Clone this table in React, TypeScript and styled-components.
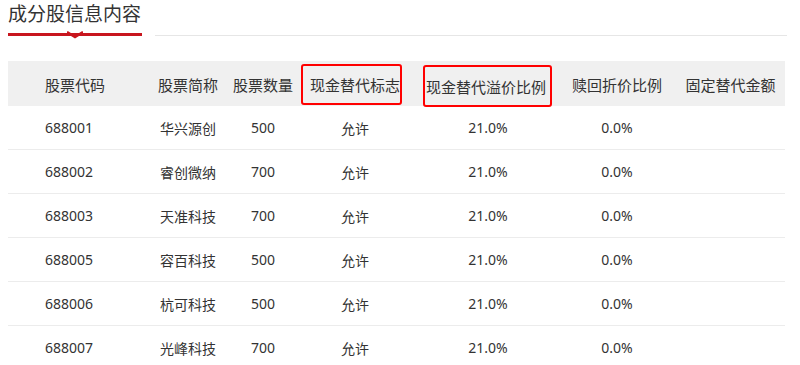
import React from 'react';
import styled, { createGlobalStyle } from 'styled-components';

const GlobalStyle = createGlobalStyle`
  body {
    margin: 0;
    background: #fff;
    font-family: "Noto Sans", "Noto Sans CJK SC", sans-serif;
    color: #333;
  }
`;

const COLS = '134px 92px 58px 126px 140px 118px 109px';

const Page = styled.div`
  padding-left: 8px;
  width: 779px;
`;

const TitleBar = styled.div`
  display: flex;
  align-items: flex-end;
  gap: 13px;
  height: 36px;
`;

const TitleTab = styled.div`
  position: relative;
  box-sizing: border-box;
  width: 134px;
  height: 100%;
  padding-top: 1px;
  border-bottom: 3px solid #c8161e;
  font-size: 19px;
  line-height: 26px;
  white-space: nowrap;
  color: #333;
`;

const Notch = styled.svg`
  position: absolute;
  left: 59px;
  top: 100%;
  margin-top: -2px;
`;

const TitleRule = styled.div`
  flex: 1;
  border-bottom: 1px solid #e6e6e6;
`;

const Table = styled.div`
  margin-top: 25px;
  width: 777px;
`;

const HeadRow = styled.div`
  display: grid;
  grid-template-columns: ${COLS};
  height: 45px;
  background: #f0f0f0;
  font-size: 15px;
`;

const Row = styled.div`
  display: grid;
  grid-template-columns: ${COLS};
  box-sizing: border-box;
  height: 44px;
  border-bottom: 1px solid #ececec;
  font-size: 14px;
`;

const Cell = styled.div<{ $left?: boolean }>`
  display: flex;
  align-items: center;
  justify-content: ${(p) => (p.$left ? 'flex-start' : 'center')};
  padding-left: ${(p) => (p.$left ? '37px' : '0')};
  white-space: nowrap;
`;

const MarkCell = styled.div<{ $offset: number }>`
  display: flex;
  align-items: center;
  padding-left: ${(p) => p.$offset}px;
  white-space: nowrap;
`;

const Marked = styled.span<{ $pl: number; $pr: number; $h: number; $dy: number }>`
  display: flex;
  align-items: center;
  box-sizing: border-box;
  height: ${(p) => p.$h}px;
  margin-top: ${(p) => p.$dy}px;
  padding: 0 ${(p) => p.$pr}px 0 ${(p) => p.$pl}px;
  border: 2px solid #f00;
  border-radius: 3px;
`;

const rows = [
  ['688001', '华兴源创', '500'],
  ['688002', '睿创微纳', '700'],
  ['688003', '天准科技', '700'],
  ['688005', '容百科技', '500'],
  ['688006', '杭可科技', '500'],
  ['688007', '光峰科技', '700'],
];

export default function App() {
  return (
    <Page>
      <GlobalStyle />
      <TitleBar>
        <TitleTab>
          成分股信息内容
          <Notch width="16" height="8" viewBox="0 0 16 8">
            <polyline points="0,1 8,6 16,1" fill="none" stroke="#c8161e" strokeWidth="2.5" />
          </Notch>
        </TitleTab>
        <TitleRule />
      </TitleBar>
      <Table>
        <HeadRow>
          <Cell $left>股票代码</Cell>
          <Cell>股票简称</Cell>
          <Cell>股票数量</Cell>
          <MarkCell $offset={9}>
            <Marked $pl={7} $pr={0} $h={41} $dy={0}>现金替代标志</Marked>
          </MarkCell>
          <MarkCell $offset={5}>
            <Marked $pl={1} $pr={4} $h={42} $dy={4}>现金替代溢价比例</Marked>
          </MarkCell>
          <Cell>赎回折价比例</Cell>
          <Cell>固定替代金额</Cell>
        </HeadRow>
        {rows.map(([code, name, qty]) => (
          <Row key={code}>
            <Cell $left>{code}</Cell>
            <Cell>{name}</Cell>
            <Cell>{qty}</Cell>
            <Cell>允许</Cell>
            <Cell>21.0%</Cell>
            <Cell>0.0%</Cell>
            <Cell />
          </Row>
        ))}
      </Table>
    </Page>
  );
}
